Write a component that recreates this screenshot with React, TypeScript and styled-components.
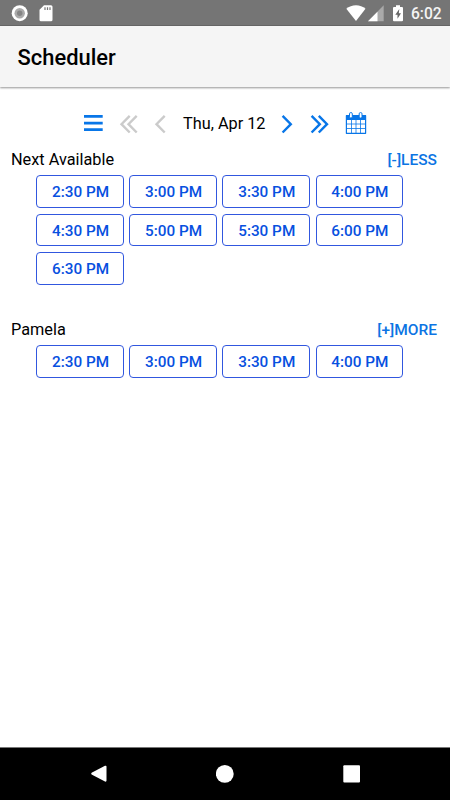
import React from "react";
import styled, { createGlobalStyle } from "styled-components";

const GlobalStyle = createGlobalStyle`
  * { box-sizing: border-box; }
  body { margin: 0; background: #fff; }
  button { font-family: inherit; background: none; border: 0; padding: 0; margin: 0; }
`;

const Screen = styled.div`
  display: flex;
  flex-direction: column;
  width: 450px;
  height: 800px;
  overflow: hidden;
  background: #fff;
  color: #000;
  font-family: Roboto, sans-serif;
  font-size: 16.3px;
`;

const StatusBar = styled.div`
  display: flex;
  flex: none;
  align-items: center;
  height: 26px;
  padding: 1px 8px 0 11px;
  background: #757575;
  border-bottom: 1px solid #686868;
  color: #fff;
`;

const StatusIcon = styled.svg<{ $gap?: number }>`
  display: block;
  flex: none;
  margin-right: ${(p) => p.$gap ?? 0}px;
`;

const Spacer = styled.div`
  flex: 1;
`;

const Clock = styled.span`
  width: 31px;
  padding-top: 2px;
  font-size: 15.6px;
  font-weight: 500;
  line-height: 22px;
  white-space: nowrap;
  color: #f4f4f4;
`;

const Header = styled.header`
  flex: none;
  height: 61px;
  padding: 1px 17.6px 0;
  background: #f5f5f5;
  box-shadow: 0 1px 2px rgba(0, 0, 0, 0.42);
`;

const Title = styled.h1`
  margin: 0;
  font-size: 21.9px;
  font-weight: 500;
  line-height: 62px;
`;

const Content = styled.main`
  flex: 1;
  padding: 22px 13px 0 11px;
`;

const DateBar = styled.div`
  display: flex;
  align-items: center;
  height: 30px;
  padding-left: 73px;
`;

const IconButton = styled.button<{ $width: number; $gap: number; $muted?: boolean }>`
  flex: none;
  width: ${(p) => p.$width}px;
  height: 24px;
  margin-right: ${(p) => p.$gap}px;
  color: ${(p) => (p.$muted ? "#cbcbcb" : "#0876e8")};

  svg {
    display: block;
    overflow: visible;
  }
`;

const DateLabel = styled.span`
  flex: none;
  width: 83px;
  margin-right: 16px;
  line-height: 24px;
  white-space: nowrap;
`;

const Group = styled.section`
  height: 170px;
  padding-top: 10px;
`;

const GroupHeader = styled.div`
  display: flex;
  justify-content: space-between;
  height: 26.3px;
  line-height: 21px;
`;

const Toggle = styled.button`
  height: 22px;
  color: #0b74e3;
  font-size: 15.5px;
  font-weight: 500;
  line-height: 22px;
`;

const Slots = styled.div`
  display: grid;
  grid-template-columns: repeat(4, 87.5px);
  grid-auto-rows: 32.7px;
  gap: 5.7px 5.6px;
  padding-left: 25.3px;
`;

const Slot = styled.button`
  padding: 1px 0 0 1px;
  border: 1px solid #3157df;
  border-radius: 4px;
  color: #0750df;
  font-size: 15.3px;
  font-weight: 500;
  line-height: 30px;
`;

const NavBar = styled.nav`
  display: flex;
  flex: none;
  justify-content: space-between;
  align-items: center;
  height: 53px;
  padding: 0 90px;
  border-top: 1px solid #777;
  background: #000;
`;

const Chevrons = ({ back, double }: { back?: boolean; double?: boolean }) => (
  <svg width={double ? 18 : 11} height="24" fill="none" stroke="currentColor" strokeWidth="2.4">
    {back ? (
      <>
        <path d="M9.7 3.9 1.5 12.2l8.2 8.3" />
        {double && <path d="M16.7 3.9 8.5 12.2l8.2 8.3" />}
      </>
    ) : (
      <>
        <path d="M.6 3.9 8.8 12.2.6 20.5" />
        {double && <path d="M7.8 3.9 16 12.2 7.8 20.5" />}
      </>
    )}
  </svg>
);

const MenuIcon = () => (
  <svg width="19" height="24" fill="currentColor">
    <path d="M0 3h18.7v2.7H0zm0 6.7h18.7v2.7H0zM0 16.3h18.7V19H0z" />
  </svg>
);

const CalendarIcon = () => (
  <svg width="21" height="24" fill="none" stroke="currentColor">
    <path d="M.5 3.5h19V7.5H.5z" fill="currentColor" />
    <path d="M.4 3.7h19.2v17.6H.4z" strokeWidth="1.2" strokeLinejoin="round" />
    <path d="M5.5 8v13M10 8v13M14.5 8v13M1 12h18.5M1 16.5h18.5" strokeWidth=".8" />
    <rect x="3.5" y=".6" width="2.8" height="5.4" rx="1.2" fill="#fff" />
    <rect x="13.2" y=".6" width="2.8" height="5.4" rx="1.2" fill="#fff" />
  </svg>
);

const available = ["2:30 PM", "3:00 PM", "3:30 PM", "4:00 PM", "4:30 PM", "5:00 PM", "5:30 PM", "6:00 PM", "6:30 PM"];

const groups = [
  { name: "Next Available", toggle: "[-]LESS", times: available },
  { name: "Pamela", toggle: "[+]MORE", times: available.slice(0, 4) },
];

export default function App() {
  return (
    <Screen>
      <GlobalStyle />
      <StatusBar>
        <StatusIcon width="17" height="17" $gap={11}>
          <circle cx="8.7" cy="8.2" r="8" fill="#fff" />
          <circle cx="8.7" cy="8.2" r="5.2" fill="#aaa" />
          <circle cx="8.7" cy="8.2" r="2.7" fill="#858585" />
        </StatusIcon>
        <StatusIcon width="14" height="17">
          <path d="M5 .2h7A1.5 1.5 0 0 1 13.5 1.7v13a1.5 1.5 0 0 1-1.5 1.5H2A1.5 1.5 0 0 1 .5 14.7V4.7Z" fill="#fff" />
          <path d="M6 2.2v2.8M8.5 2.2v2.8M11 2.2v2.8" stroke="#757575" strokeWidth="1.2" />
        </StatusIcon>
        <Spacer />
        <StatusIcon width="20" height="17" $gap={2}>
          <path d="M.3 3.7C5.5-1 14.5-1 19.5 3.7L10 16Z" fill="#fff" />
        </StatusIcon>
        <StatusIcon width="16" height="17" $gap={9}>
          <path d="M15.7 .3v15.9H0Z" fill="#a9a9a9" />
          <path d="M9.5 6.7v9.5H0Z" fill="#fff" />
        </StatusIcon>
        <StatusIcon width="10" height="17" $gap={8}>
          <path d="M3 .2h4v1.7h2q1 0 1 1v12.3q0 1-1 1H1q-1 0-1-1V2.9q0-1 1-1h2Z" fill="#fff" />
          <path d="M6.3 4 2.3 9.7h2.2v4L8 8.2H5.8Z" fill="#666" />
        </StatusIcon>
        <Clock>6:02</Clock>
      </StatusBar>
      <Header>
        <Title>Scheduler</Title>
      </Header>
      <Content>
        <DateBar>
          <IconButton $width={19} $gap={17} aria-label="Menu"><MenuIcon /></IconButton>
          <IconButton $width={18} $gap={17} $muted aria-label="Previous week"><Chevrons back double /></IconButton>
          <IconButton $width={11} $gap={17} $muted aria-label="Previous day"><Chevrons back /></IconButton>
          <DateLabel>Thu, Apr 12</DateLabel>
          <IconButton $width={11} $gap={18} aria-label="Next day"><Chevrons /></IconButton>
          <IconButton $width={18} $gap={17} aria-label="Next week"><Chevrons double /></IconButton>
          <IconButton $width={21} $gap={0} aria-label="Calendar"><CalendarIcon /></IconButton>
        </DateBar>
        {groups.map((group) => (
          <Group key={group.name}>
            <GroupHeader>
              <span>{group.name}</span>
              <Toggle>{group.toggle}</Toggle>
            </GroupHeader>
            <Slots>
              {group.times.map((time) => (
                <Slot key={time}>{time}</Slot>
              ))}
            </Slots>
          </Group>
        ))}
      </Content>
      <NavBar>
        <svg width="17" height="18"><path d="M15 .8 1.6 7.8q-.9.9 0 1.8L15 16.6q1.5.5 1.5-1V1.7q0-1.4-1.5-.9Z" fill="#fff" /></svg>
        <svg width="18" height="18"><circle cx="8.8" cy="8.9" r="8.9" fill="#fff" /></svg>
        <svg width="17" height="18"><rect x=".3" y=".3" width="16.7" height="17.3" rx="1" fill="#fff" /></svg>
      </NavBar>
    </Screen>
  );
}
